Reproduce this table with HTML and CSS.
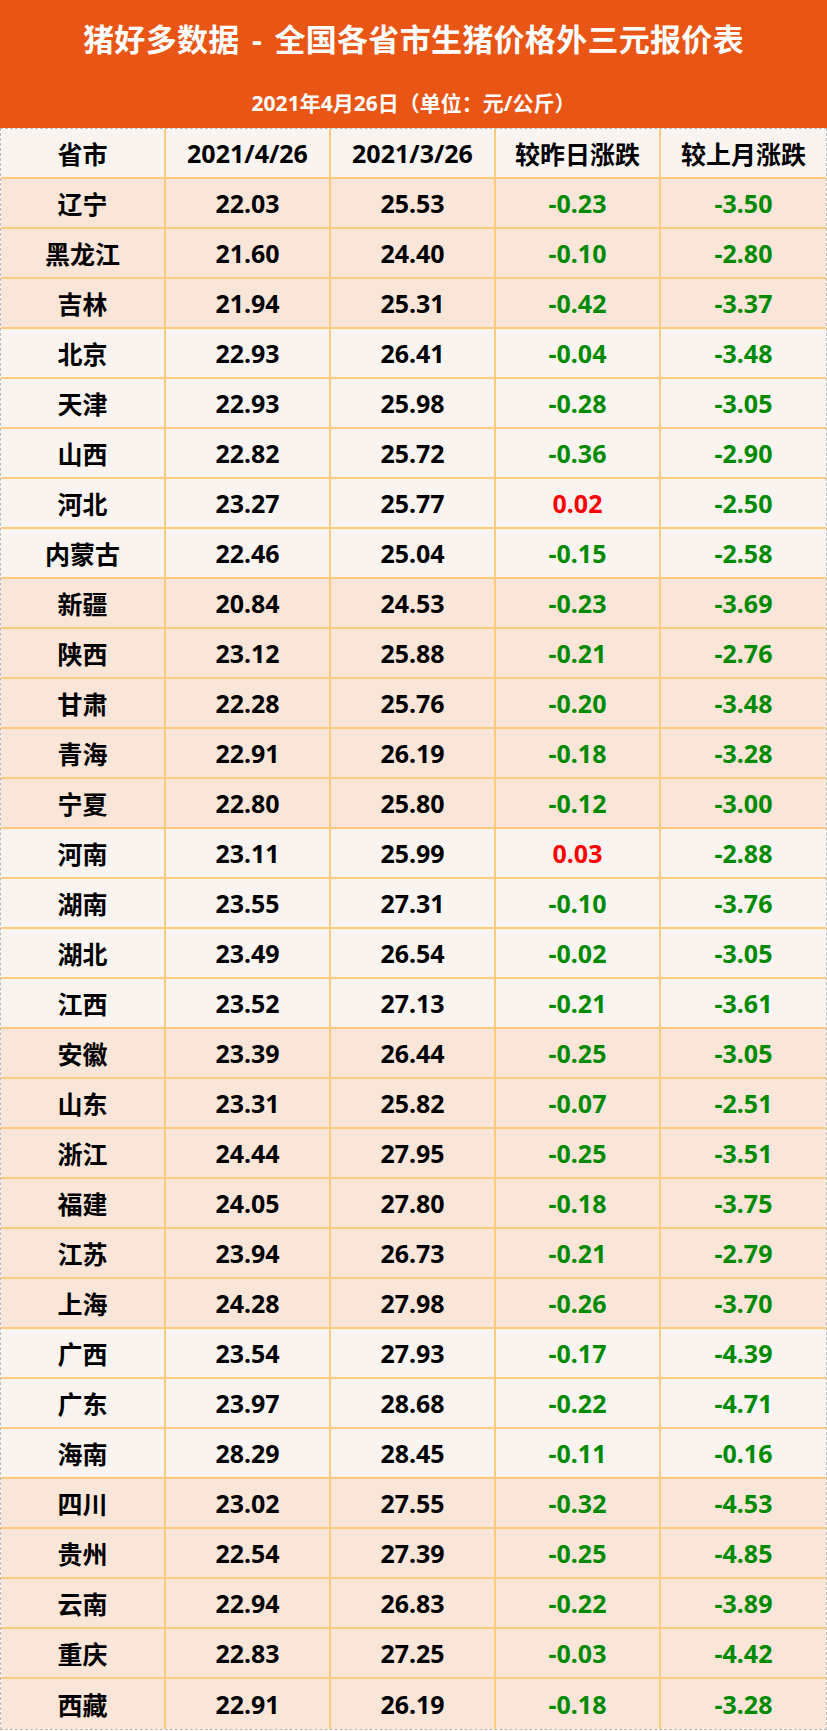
FILE: index.html
```html
<!DOCTYPE html>
<html lang="zh-CN">
<head>
<meta charset="utf-8">
<title>猪好多数据 - 全国各省市生猪价格外三元报价表</title>
<link rel="stylesheet" href="styles.css">
</head>
<body>
<div class="page">
  <header class="banner">
    <h1 class="title">猪好多数据 - 全国各省市生猪价格外三元报价表</h1>
    <p class="subtitle">2021年4月26日（单位：元/公斤）</p>
  </header>
  <div class="table">
    <div class="row head"><div class="cell">省市</div><div class="cell">2021/4/26</div><div class="cell">2021/3/26</div><div class="cell">较昨日涨跌</div><div class="cell">较上月涨跌</div></div>
    <div class="row peach"><div class="cell">辽宁</div><div class="cell">22.03</div><div class="cell">25.53</div><div class="cell down">-0.23</div><div class="cell down">-3.50</div></div>
    <div class="row peach"><div class="cell">黑龙江</div><div class="cell">21.60</div><div class="cell">24.40</div><div class="cell down">-0.10</div><div class="cell down">-2.80</div></div>
    <div class="row peach"><div class="cell">吉林</div><div class="cell">21.94</div><div class="cell">25.31</div><div class="cell down">-0.42</div><div class="cell down">-3.37</div></div>
    <div class="row light"><div class="cell">北京</div><div class="cell">22.93</div><div class="cell">26.41</div><div class="cell down">-0.04</div><div class="cell down">-3.48</div></div>
    <div class="row light"><div class="cell">天津</div><div class="cell">22.93</div><div class="cell">25.98</div><div class="cell down">-0.28</div><div class="cell down">-3.05</div></div>
    <div class="row light"><div class="cell">山西</div><div class="cell">22.82</div><div class="cell">25.72</div><div class="cell down">-0.36</div><div class="cell down">-2.90</div></div>
    <div class="row light"><div class="cell">河北</div><div class="cell">23.27</div><div class="cell">25.77</div><div class="cell up">0.02</div><div class="cell down">-2.50</div></div>
    <div class="row light"><div class="cell">内蒙古</div><div class="cell">22.46</div><div class="cell">25.04</div><div class="cell down">-0.15</div><div class="cell down">-2.58</div></div>
    <div class="row peach"><div class="cell">新疆</div><div class="cell">20.84</div><div class="cell">24.53</div><div class="cell down">-0.23</div><div class="cell down">-3.69</div></div>
    <div class="row peach"><div class="cell">陕西</div><div class="cell">23.12</div><div class="cell">25.88</div><div class="cell down">-0.21</div><div class="cell down">-2.76</div></div>
    <div class="row peach"><div class="cell">甘肃</div><div class="cell">22.28</div><div class="cell">25.76</div><div class="cell down">-0.20</div><div class="cell down">-3.48</div></div>
    <div class="row peach"><div class="cell">青海</div><div class="cell">22.91</div><div class="cell">26.19</div><div class="cell down">-0.18</div><div class="cell down">-3.28</div></div>
    <div class="row peach"><div class="cell">宁夏</div><div class="cell">22.80</div><div class="cell">25.80</div><div class="cell down">-0.12</div><div class="cell down">-3.00</div></div>
    <div class="row light"><div class="cell">河南</div><div class="cell">23.11</div><div class="cell">25.99</div><div class="cell up">0.03</div><div class="cell down">-2.88</div></div>
    <div class="row light"><div class="cell">湖南</div><div class="cell">23.55</div><div class="cell">27.31</div><div class="cell down">-0.10</div><div class="cell down">-3.76</div></div>
    <div class="row light"><div class="cell">湖北</div><div class="cell">23.49</div><div class="cell">26.54</div><div class="cell down">-0.02</div><div class="cell down">-3.05</div></div>
    <div class="row light"><div class="cell">江西</div><div class="cell">23.52</div><div class="cell">27.13</div><div class="cell down">-0.21</div><div class="cell down">-3.61</div></div>
    <div class="row peach"><div class="cell">安徽</div><div class="cell">23.39</div><div class="cell">26.44</div><div class="cell down">-0.25</div><div class="cell down">-3.05</div></div>
    <div class="row peach"><div class="cell">山东</div><div class="cell">23.31</div><div class="cell">25.82</div><div class="cell down">-0.07</div><div class="cell down">-2.51</div></div>
    <div class="row peach"><div class="cell">浙江</div><div class="cell">24.44</div><div class="cell">27.95</div><div class="cell down">-0.25</div><div class="cell down">-3.51</div></div>
    <div class="row peach"><div class="cell">福建</div><div class="cell">24.05</div><div class="cell">27.80</div><div class="cell down">-0.18</div><div class="cell down">-3.75</div></div>
    <div class="row peach"><div class="cell">江苏</div><div class="cell">23.94</div><div class="cell">26.73</div><div class="cell down">-0.21</div><div class="cell down">-2.79</div></div>
    <div class="row peach"><div class="cell">上海</div><div class="cell">24.28</div><div class="cell">27.98</div><div class="cell down">-0.26</div><div class="cell down">-3.70</div></div>
    <div class="row light"><div class="cell">广西</div><div class="cell">23.54</div><div class="cell">27.93</div><div class="cell down">-0.17</div><div class="cell down">-4.39</div></div>
    <div class="row light"><div class="cell">广东</div><div class="cell">23.97</div><div class="cell">28.68</div><div class="cell down">-0.22</div><div class="cell down">-4.71</div></div>
    <div class="row light"><div class="cell">海南</div><div class="cell">28.29</div><div class="cell">28.45</div><div class="cell down">-0.11</div><div class="cell down">-0.16</div></div>
    <div class="row peach"><div class="cell">四川</div><div class="cell">23.02</div><div class="cell">27.55</div><div class="cell down">-0.32</div><div class="cell down">-4.53</div></div>
    <div class="row peach"><div class="cell">贵州</div><div class="cell">22.54</div><div class="cell">27.39</div><div class="cell down">-0.25</div><div class="cell down">-4.85</div></div>
    <div class="row peach"><div class="cell">云南</div><div class="cell">22.94</div><div class="cell">26.83</div><div class="cell down">-0.22</div><div class="cell down">-3.89</div></div>
    <div class="row peach"><div class="cell">重庆</div><div class="cell">22.83</div><div class="cell">27.25</div><div class="cell down">-0.03</div><div class="cell down">-4.42</div></div>
    <div class="row peach last"><div class="cell">西藏</div><div class="cell">22.91</div><div class="cell">26.19</div><div class="cell down">-0.18</div><div class="cell down">-3.28</div></div>
  </div>
</div>
</body>
</html>
```

FILE: styles.css
```css
* {
  box-sizing: border-box;
}

html, body {
  margin: 0;
  padding: 0;
  background: #ffffff;
}

body {
  font-family: "Noto Sans", "Noto Sans CJK SC", sans-serif;
  font-weight: 700;
  color: #000000;
}

.page {
  width: 827px;
}

.banner {
  background: #e95515;
  color: #ffffff;
  height: 128px;
  display: flex;
  flex-direction: column;
  align-items: center;
  padding-top: 18px;
}

.title {
  margin: 0;
  font-size: 31px;
  line-height: 42px;
  font-weight: 700;
  word-spacing: 4px;
  letter-spacing: 0.3px;
}

.subtitle {
  margin: 29px 0 0 0;
  font-size: 21px;
  line-height: 28px;
  font-weight: 700;
}

.table {
  border: 1px dashed #b9b9b9;
  width: 827px;
}

.row {
  display: grid;
  grid-template-columns: repeat(5, 165px);
  height: 50px;
  border-bottom: 2px solid #fdca7e;
}

.row.last {
  border-bottom: none;
}

.head {
  background: #f9f4f0;
}

.light {
  background: #f9f4f0;
}

.peach {
  background: #fae5d9;
}

.cell {
  display: flex;
  align-items: center;
  justify-content: center;
  font-size: 25px;
  border-right: 2px solid #fdca7e;
}

.cell:last-child {
  border-right: none;
}

.down {
  color: #008a00;
}

.up {
  color: #ff0000;
}
```
